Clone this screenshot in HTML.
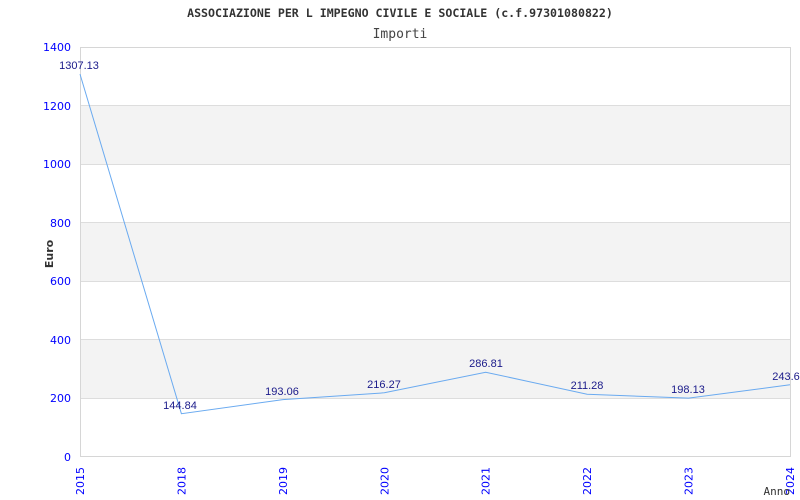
<!DOCTYPE html>
<html><head><meta charset="utf-8"><style>html,body{margin:0;padding:0;background:#fff}svg{display:block}</style></head>
<body>
<svg width="800" height="500" xmlns="http://www.w3.org/2000/svg">
<rect width="800" height="500" fill="#fff"/>
<text x="400" y="17" text-anchor="middle" font-family="DejaVu Sans Mono, Liberation Mono, monospace" font-size="11.6" font-weight="bold" fill="#333">ASSOCIAZIONE PER L IMPEGNO CIVILE E SOCIALE (c.f.97301080822)</text>
<text x="400" y="38" text-anchor="middle" font-family="DejaVu Sans Mono, Liberation Mono, monospace" font-size="13" fill="#444">Importi</text>
<rect x="80" y="105.6" width="710" height="58.4" fill="#f3f3f3"/>
<rect x="80" y="222.6" width="710" height="58.4" fill="#f3f3f3"/>
<rect x="80" y="339.6" width="710" height="58.4" fill="#f3f3f3"/>
<g stroke="#ddd" stroke-width="1">
<line x1="80" y1="105.5" x2="790" y2="105.5"/><line x1="80" y1="164.5" x2="790" y2="164.5"/>
<line x1="80" y1="222.5" x2="790" y2="222.5"/><line x1="80" y1="281.5" x2="790" y2="281.5"/>
<line x1="80" y1="339.5" x2="790" y2="339.5"/><line x1="80" y1="398.5" x2="790" y2="398.5"/>
</g>
<rect x="80.5" y="47.5" width="710" height="409" fill="none" stroke="#d6d6d6"/>
<g font-family="DejaVu Sans, Verdana, sans-serif" font-size="11" fill="#0000ff" text-anchor="end">
<text x="71" y="51">1400</text><text x="71" y="110">1200</text><text x="71" y="168">1000</text>
<text x="71" y="227">800</text><text x="71" y="285">600</text><text x="71" y="344">400</text>
<text x="71" y="402">200</text><text x="71" y="461">0</text>
</g>
<g font-family="DejaVu Sans, Verdana, sans-serif" font-size="11" fill="#0000ff" text-anchor="end">
<text transform="translate(84,467) rotate(-90)">2015</text>
<text transform="translate(185.4,467) rotate(-90)">2018</text>
<text transform="translate(286.9,467) rotate(-90)">2019</text>
<text transform="translate(388.3,467) rotate(-90)">2020</text>
<text transform="translate(489.7,467) rotate(-90)">2021</text>
<text transform="translate(591.1,467) rotate(-90)">2022</text>
<text transform="translate(692.6,467) rotate(-90)">2023</text>
<text transform="translate(794,467) rotate(-90)">2024</text>
</g>
<text transform="translate(53,254) rotate(-90)" text-anchor="middle" font-family="DejaVu Sans, sans-serif" font-size="11" font-weight="bold" fill="#333">Euro</text>
<text x="790" y="495" text-anchor="end" font-family="DejaVu Sans Mono, Liberation Mono, monospace" font-size="11" fill="#333">Anno</text>
<polyline fill="none" stroke="#6aaaf0" stroke-width="1" points="80,74.1 181.4,413.7 282.9,399.6 384.3,392.8 485.7,372.2 587.1,394.3 688.6,398.1 790,384.8"/>
<g font-family="Liberation Sans, Arial, sans-serif" font-size="11" fill="#1a1a8a" text-anchor="middle">
<text x="79" y="69">1307.13</text>
<text x="180" y="409">144.84</text>
<text x="282" y="395">193.06</text>
<text x="384" y="388">216.27</text>
<text x="486" y="367">286.81</text>
<text x="587" y="389">211.28</text>
<text x="688" y="393">198.13</text>
<text x="786" y="380">243.6</text>
</g>
</svg>
</body></html>
